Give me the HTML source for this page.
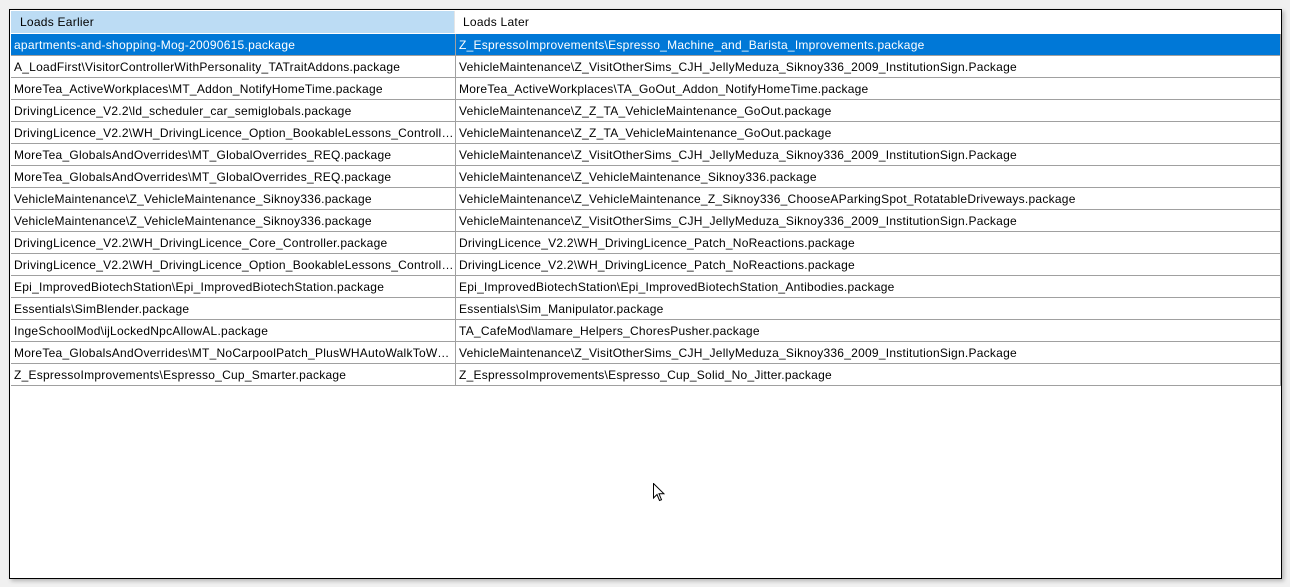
<!DOCTYPE html>
<html><head><meta charset="utf-8"><style>
body{margin:0;width:1290px;height:587px;background:#f0f0f0;position:relative;overflow:hidden;font-family:"Liberation Sans",sans-serif;font-size:12px;letter-spacing:0.25px;}
#box{position:absolute;left:9px;top:9px;width:1271px;height:568px;background:#fff;border:1px solid #000;box-shadow:2px 2px 4px rgba(0,0,0,.25);}
.hdr{position:absolute;top:1px;height:22px;line-height:23px;}
.h1{left:1px;width:444px;background:#bcdcf4;padding-left:9px;box-sizing:border-box;border-right:1px solid #e5e5e5;}
.h2{left:446px;width:824px;background:#fff;padding-left:7px;box-sizing:border-box;}
.row{position:absolute;left:1px;width:1270px;height:22px;border-bottom:1px solid #a0a0a0;box-sizing:border-box;line-height:23px;color:#000;}
.row.sel{background:#0078d7;color:#fff;}
.c1,.c2{position:absolute;top:0;height:21px;white-space:nowrap;overflow:hidden;box-sizing:border-box;}
.c1{left:0;width:444px;padding-left:3px;text-overflow:ellipsis;}
.c2{left:444px;width:826px;padding-left:3px;border-left:1px solid #a0a0a0;}
</style></head><body>
<div id="box">
<div class="hdr h1">Loads Earlier</div>
<div class="hdr h2">Loads Later</div>
<div class="row sel" style="top:24px"><div class="c1">apartments-and-shopping-Mog-20090615.package</div><div class="c2">Z_EspressoImprovements\Espresso_Machine_and_Barista_Improvements.package</div></div>
<div class="row" style="top:46px"><div class="c1">A_LoadFirst\VisitorControllerWithPersonality_TATraitAddons.package</div><div class="c2">VehicleMaintenance\Z_VisitOtherSims_CJH_JellyMeduza_Siknoy336_2009_InstitutionSign.Package</div></div>
<div class="row" style="top:68px"><div class="c1">MoreTea_ActiveWorkplaces\MT_Addon_NotifyHomeTime.package</div><div class="c2">MoreTea_ActiveWorkplaces\TA_GoOut_Addon_NotifyHomeTime.package</div></div>
<div class="row" style="top:90px"><div class="c1">DrivingLicence_V2.2\ld_scheduler_car_semiglobals.package</div><div class="c2">VehicleMaintenance\Z_Z_TA_VehicleMaintenance_GoOut.package</div></div>
<div class="row" style="top:112px"><div class="c1">DrivingLicence_V2.2\WH_DrivingLicence_Option_BookableLessons_Controller.package</div><div class="c2">VehicleMaintenance\Z_Z_TA_VehicleMaintenance_GoOut.package</div></div>
<div class="row" style="top:134px"><div class="c1">MoreTea_GlobalsAndOverrides\MT_GlobalOverrides_REQ.package</div><div class="c2">VehicleMaintenance\Z_VisitOtherSims_CJH_JellyMeduza_Siknoy336_2009_InstitutionSign.Package</div></div>
<div class="row" style="top:156px"><div class="c1">MoreTea_GlobalsAndOverrides\MT_GlobalOverrides_REQ.package</div><div class="c2">VehicleMaintenance\Z_VehicleMaintenance_Siknoy336.package</div></div>
<div class="row" style="top:178px"><div class="c1">VehicleMaintenance\Z_VehicleMaintenance_Siknoy336.package</div><div class="c2">VehicleMaintenance\Z_VehicleMaintenance_Z_Siknoy336_ChooseAParkingSpot_RotatableDriveways.package</div></div>
<div class="row" style="top:200px"><div class="c1">VehicleMaintenance\Z_VehicleMaintenance_Siknoy336.package</div><div class="c2">VehicleMaintenance\Z_VisitOtherSims_CJH_JellyMeduza_Siknoy336_2009_InstitutionSign.Package</div></div>
<div class="row" style="top:222px"><div class="c1">DrivingLicence_V2.2\WH_DrivingLicence_Core_Controller.package</div><div class="c2">DrivingLicence_V2.2\WH_DrivingLicence_Patch_NoReactions.package</div></div>
<div class="row" style="top:244px"><div class="c1">DrivingLicence_V2.2\WH_DrivingLicence_Option_BookableLessons_Controller.package</div><div class="c2">DrivingLicence_V2.2\WH_DrivingLicence_Patch_NoReactions.package</div></div>
<div class="row" style="top:266px"><div class="c1">Epi_ImprovedBiotechStation\Epi_ImprovedBiotechStation.package</div><div class="c2">Epi_ImprovedBiotechStation\Epi_ImprovedBiotechStation_Antibodies.package</div></div>
<div class="row" style="top:288px"><div class="c1">Essentials\SimBlender.package</div><div class="c2">Essentials\Sim_Manipulator.package</div></div>
<div class="row" style="top:310px"><div class="c1">IngeSchoolMod\ijLockedNpcAllowAL.package</div><div class="c2">TA_CafeMod\lamare_Helpers_ChoresPusher.package</div></div>
<div class="row" style="top:332px"><div class="c1">MoreTea_GlobalsAndOverrides\MT_NoCarpoolPatch_PlusWHAutoWalkToWork.package</div><div class="c2">VehicleMaintenance\Z_VisitOtherSims_CJH_JellyMeduza_Siknoy336_2009_InstitutionSign.Package</div></div>
<div class="row" style="top:354px"><div class="c1">Z_EspressoImprovements\Espresso_Cup_Smarter.package</div><div class="c2">Z_EspressoImprovements\Espresso_Cup_Solid_No_Jitter.package</div></div>
<div style="position:absolute;left:1270px;top:24px;width:1px;height:352px;background:#a0a0a0"></div>
</div>
<svg style="position:absolute;left:653px;top:483px" width="12" height="19" viewBox="0 0 12 19"><path d="M0.5 0.5 L0.5 15 L4 11.5 L6.5 17.5 L8.5 16.7 L6 10.8 L11 10.8 Z" fill="#fff" stroke="#000" stroke-width="1"/></svg>
</body></html>
